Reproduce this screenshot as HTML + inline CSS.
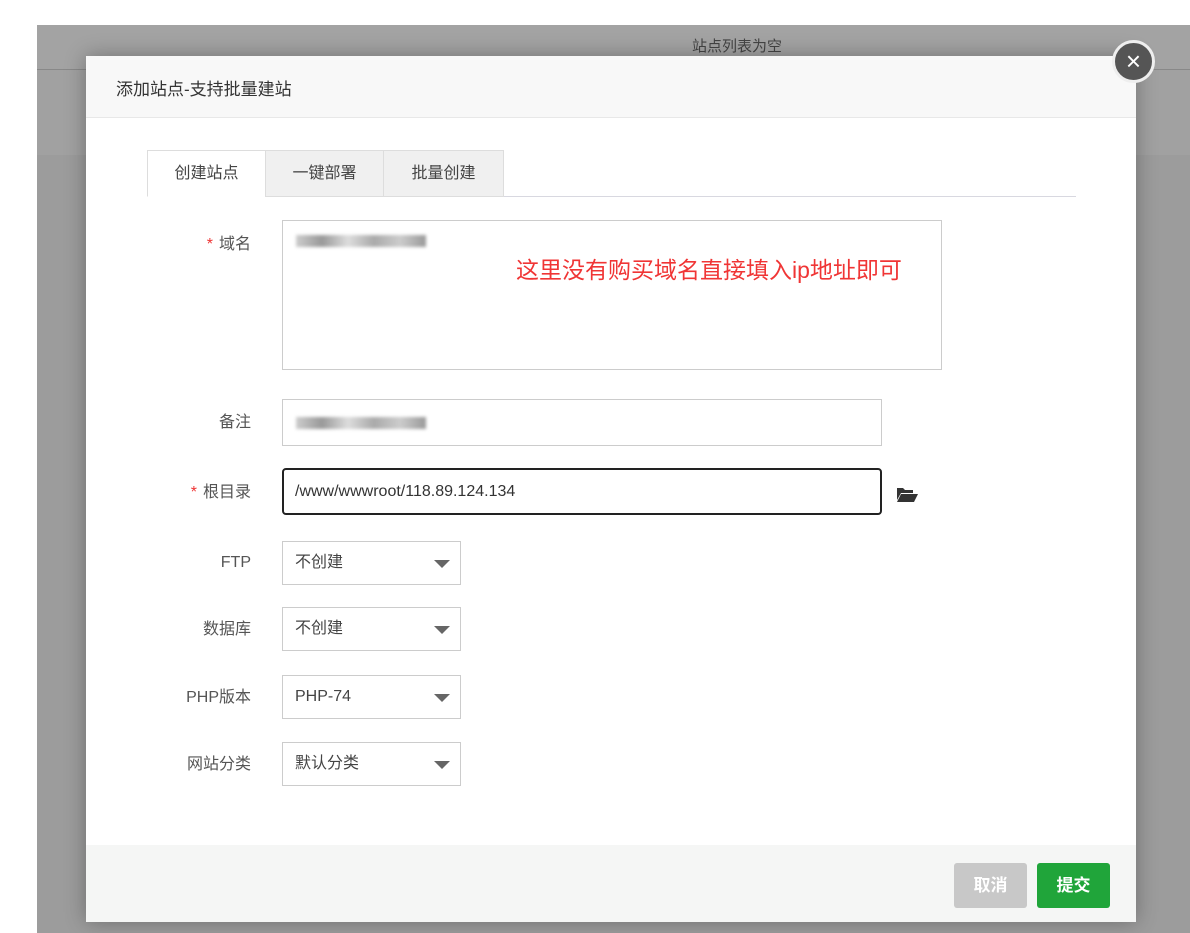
<!DOCTYPE html>
<html><head><meta charset="utf-8"><style>
*{box-sizing:border-box;margin:0;padding:0}
body{width:1190px;height:933px;background:#fff;position:relative;overflow:hidden;font-family:"Liberation Sans","Noto Sans CJK SC",sans-serif;color:#555;font-size:16px}
.ov{position:absolute;left:37px;top:25px;width:1153px;height:908px;background:#9c9c9c}
.bar{position:absolute;left:37px;top:25px;width:1153px;height:45px;background:#a3a3a3;border-bottom:1px solid #888}
.bar span{position:absolute;left:655px;top:10px;font-size:15px;color:#444}
.bar2{position:absolute;left:37px;top:70px;width:1153px;height:85px;background:#a1a1a1}
.m{position:absolute;left:86px;top:56px;width:1050px;height:866px;background:#fff;box-shadow:0 0 20px rgba(0,0,0,.3)}
.hd{height:62px;background:#f8f8f8;border-bottom:1px solid #e8e8e8;padding:19px 0 0 30px;font-size:17px;color:#333}
.ft{position:absolute;left:0;bottom:0;width:100%;height:77px;background:#f5f6f5}
.close{position:absolute;left:1112px;top:40px;width:43px;height:43px;border-radius:50%;background:#555;border:3px solid #eee;color:#fff;text-align:center;line-height:36px;font-size:26px}
.tabs{position:absolute;left:61px;top:94px;width:929px;height:47px;border-bottom:1px solid #d8d8e0}
.tab{position:absolute;top:0;height:47px;border:1px solid #ddd;background:#f0f0f0;text-align:center;line-height:46px;font-size:16px;color:#444}
.tab.a{background:#fff;border-bottom-color:#fff}
.lbl{position:absolute;right:885px;font-size:16px;color:#555;line-height:20px}
.lbl i{color:#e33;font-style:normal;margin-right:6px}
.in{position:absolute;left:196px;border:1px solid #ccc;background:#fff}
.sel{position:absolute;left:196px;width:179px;height:44px;border:1px solid #ccc;padding-left:12px;font-size:16px;color:#444;line-height:42px}
.sel:after{content:"";position:absolute;right:10px;top:18px;border-left:8px solid transparent;border-right:8px solid transparent;border-top:8px solid #666}
.blur{position:absolute;height:12px;width:130px;background:linear-gradient(90deg,#ccc,#999 20%,#ddd 40%,#aaa 60%,#ccc 80%,#999);filter:blur(1.5px)}
.btn{position:absolute;top:807px;height:45px;width:73px;border-radius:3px;color:#fff;text-align:center;line-height:45px;font-size:17px;font-weight:bold}
</style></head><body>
<div class="ov"></div><div class="bar2"></div>
<div class="bar"><span>站点列表为空</span></div>
<div class="m">
<div class="hd">添加站点-支持批量建站</div>
<div class="tabs">
<div class="tab a" style="left:0;width:119px">创建站点</div>
<div class="tab" style="left:118px;width:119px">一键部署</div>
<div class="tab" style="left:236px;width:121px">批量创建</div>
</div>
<div class="lbl" style="top:179px"><i>*</i>域名</div>
<div class="in" style="top:164px;width:660px;height:150px"></div>
<div class="blur" style="left:210px;top:179px"></div>
<div style="position:absolute;left:430px;top:199px;color:#f03535;font-size:23px;line-height:30px">这里没有购买域名直接填入ip地址即可</div>
<div class="lbl" style="top:357px">备注</div>
<div class="in" style="top:343px;width:600px;height:47px"></div>
<div class="blur" style="left:210px;top:361px"></div>
<div class="lbl" style="top:427px"><i>*</i>根目录</div>
<div class="in" style="top:412px;width:600px;height:47px;border:2px solid #222;border-radius:4px;padding-left:11px;line-height:43px;color:#333;font-size:16px">/www/wwwroot/118.89.124.134</div>
<svg style="position:absolute;left:810px;top:430px" width="22" height="16" viewBox="0 0 22 16"><path d="M1 2h6l2 2h8v3H5L1 14z" fill="#333"/><path d="M5 8h17l-4 8H1z" fill="#333"/></svg>
<div class="lbl" style="top:497px">FTP</div>
<div class="sel" style="top:485px">不创建</div>
<div class="lbl" style="top:564px">数据库</div>
<div class="sel" style="top:551px">不创建</div>
<div class="lbl" style="top:632px">PHP版本</div>
<div class="sel" style="top:619px">PHP-74</div>
<div class="lbl" style="top:699px">网站分类</div>
<div class="sel" style="top:686px">默认分类</div>
<div class="ft"></div>
<div class="btn" style="left:868px;background:#c8c8c8">取消</div>
<div class="btn" style="left:951px;background:#20a53a">提交</div>
</div>
<div class="close">×</div>
</body></html>
